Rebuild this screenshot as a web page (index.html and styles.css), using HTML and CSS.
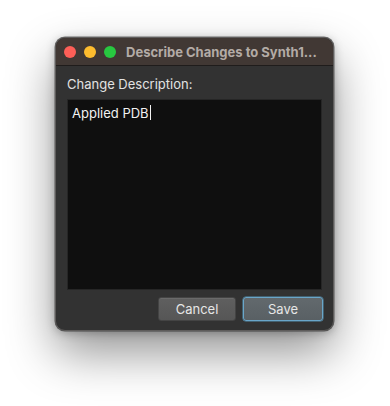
FILE: index.html
```html
<!DOCTYPE html>
<html>
<head>
<meta charset="utf-8">
<link rel="stylesheet" href="styles.css">
</head>
<body>
<div class="window">
  <div class="titlebar">
    <span class="light red"></span>
    <span class="light yellow"></span>
    <span class="light green"></span>
    <span class="title">Describe Changes to Synth1...</span>
  </div>
  <div class="content">
    <div class="label">Change Description:</div>
    <div class="field"><span class="text">Applied PDB</span><span class="caret"></span></div>
    <div class="buttons">
      <button class="btn cancel">Cancel</button>
      <button class="btn save">Save</button>
    </div>
  </div>
</div>
</body>
</html>
```
FILE: styles.css
```css
html, body {
  margin: 0;
  padding: 0;
  background: #ffffff;
}
body {
  width: 390px;
  height: 406px;
  padding: 37px 0 0 55px;
  box-sizing: border-box;
  font-family: "Inter", "Liberation Sans", sans-serif;
}
.window {
  width: 279px;
  height: 294px;
  box-sizing: border-box;
  border: 1px solid #5e5c5b;
  border-radius: 10px;
  background: #323232;
  overflow: hidden;
  box-shadow: 0 22px 48px rgba(0,0,0,0.42), 0 2px 10px rgba(0,0,0,0.25), 0 0 0 0.5px rgba(0,0,0,0.5);
  display: flex;
  flex-direction: column;
}
.titlebar {
  height: 27px;
  flex: none;
  background: #413834;
  border-bottom: 1px solid #1f1c1b;
  display: flex;
  align-items: center;
  padding-left: 8px;
}
.light {
  width: 12px;
  height: 12px;
  border-radius: 50%;
  margin-right: 8px;
  flex: none;
}
.red { background: #fe5f57; }
.yellow { background: #febc2e; }
.green { background: #28c840; }
.title {
  margin-left: 2px;
  font-size: 13px;
  font-weight: 700;
  color: #b3aba6;
  white-space: nowrap;
}
.content {
  flex: 1;
  display: flex;
  flex-direction: column;
  padding: 10px 11px 10px 11px;
}
.label {
  font-size: 13px;
  line-height: 16px;
  color: #e2e2e2;
  margin-bottom: 7px;
}
.field {
  height: 191px;
  box-sizing: border-box;
  background: #0f0f0f;
  border: 1px solid #262626;
  padding: 5px 4px;
  display: flex;
  align-items: flex-start;
}
.text {
  font-size: 13px;
  line-height: 16px;
  color: #f2f2f2;
}
.caret {
  width: 1px;
  height: 15px;
  background: #f2f2f2;
  margin-left: 1px;
}
.buttons {
  display: flex;
  justify-content: flex-end;
  gap: 7px;
  margin-top: 7px;
  margin-right: -1px;
}
.btn {
  height: 24px;
  box-sizing: border-box;
  font-family: "Inter", "Liberation Sans", sans-serif;
  font-size: 13px;
  color: #e6e6e6;
  border-radius: 3px;
  padding: 0;
}
.cancel {
  width: 78px;
  background: linear-gradient(#5f5f5f, #565656);
  border: 1px solid #444;
  box-shadow: inset 0 1px 0 #6a6a6a;
}
.save {
  width: 80px;
  background: linear-gradient(#62696d, #596064);
  border: 1px solid #6aa6c9;
  box-shadow: 0 0 0 0.5px #5590b0;
}
```
